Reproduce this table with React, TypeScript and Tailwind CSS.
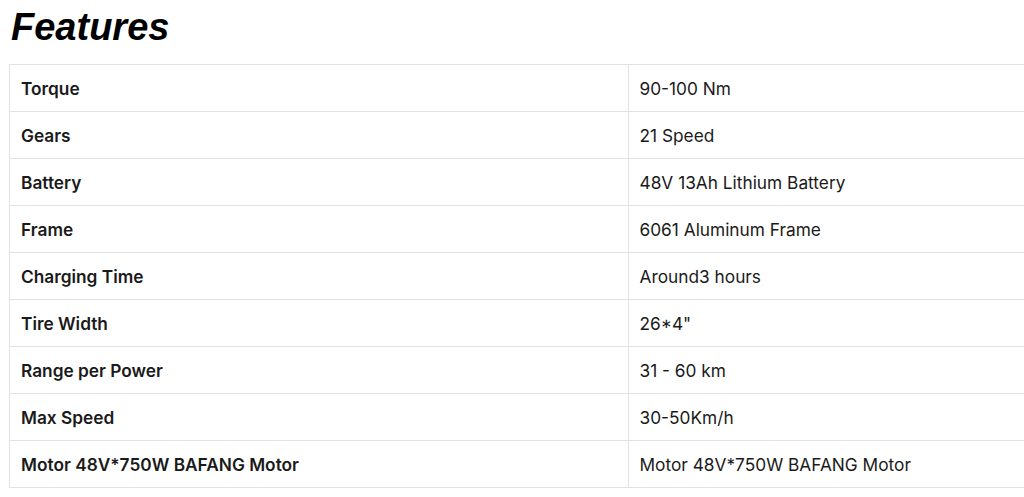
const FEATURES = [
  { label: "Torque", value: "90-100 Nm" },
  { label: "Gears", value: "21 Speed" },
  { label: "Battery", value: "48V 13Ah Lithium Battery" },
  { label: "Frame", value: "6061 Aluminum Frame" },
  { label: "Charging Time", value: "Around3 hours" },
  { label: "Tire Width", value: '26*4"' },
  { label: "Range per Power", value: "31 - 60 km" },
  { label: "Max Speed", value: "30-50Km/h" },
  { label: "Motor 48V*750W BAFANG Motor", value: "Motor 48V*750W BAFANG Motor" },
];

export default function App() {
  return (
    <div className="h-[497px] w-[1024px] overflow-hidden bg-white">
      <h2 className="pl-[11px] pt-[5px] font-['Liberation_Sans',Arial,sans-serif] text-[38px] font-bold italic leading-[44px] text-black">
        Features
      </h2>
      <div className="pl-[9px] pt-[15px]">
        <table className="w-[1238px] table-fixed border-collapse font-['Inter',sans-serif] text-[17.3px] text-[#1a1a1a]">
          <tbody>
            {FEATURES.map((row) => (
              <tr key={row.label} className="h-[47px]">
                <td className="border border-[#e2e2e2] px-[11px] pt-[1px] font-semibold">{row.label}</td>
                <td className="border border-[#e2e2e2] px-[11px] pt-[1px]">{row.value}</td>
              </tr>
            ))}
          </tbody>
        </table>
      </div>
    </div>
  );
}
